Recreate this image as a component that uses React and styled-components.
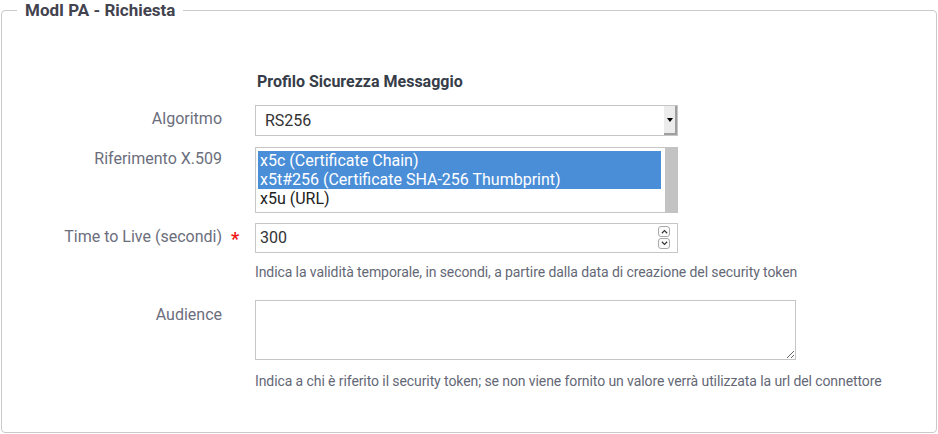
import styled, { createGlobalStyle } from "styled-components";

const GlobalStyle = createGlobalStyle`
  html, body {
    margin: 0;
    padding: 0;
    background: #ffffff;
    font-family: Roboto, "Liberation Sans", Arial, sans-serif;
  }
`;

const riferimenti = [
  { label: "x5c (Certificate Chain)", selected: true },
  { label: "x5t#256 (Certificate SHA-256 Thumbprint)", selected: true },
  { label: "x5u (URL)", selected: false },
];

export default function App() {
  return (
    <>
      <GlobalStyle />
      <Panel>
        <Legend>ModI PA - Richiesta</Legend>
        <Body>
          <Row>
            <span />
            <span />
            <SectionTitle>Profilo Sicurezza Messaggio</SectionTitle>
          </Row>

          <Row $gap={11}>
            <Label $top={4}>Algoritmo</Label>
            <span />
            <SelectBox>
              RS256
              <ArrowButton>
                <ArrowDown />
              </ArrowButton>
            </SelectBox>
          </Row>

          <Row $gap={10}>
            <Label $top={2}>Riferimento X.509</Label>
            <span />
            <ListBox>
              <OptionList>
                {riferimenti.map((opt) => (
                  <Option key={opt.label} $selected={opt.selected}>
                    {opt.label}
                  </Option>
                ))}
              </OptionList>
              <ScrollTrack />
            </ListBox>
          </Row>

          <Row $gap={0}>
            <Label $top={4}>Time to Live (secondi)</Label>
            <Required>*</Required>
            <Field>
              <NumberBox>
                300
                <Spinner>
                  <SpinButton>
                    <Chevron viewBox="0 0 8 5">
                      <path d="M1 4.5 L4 1.5 L7 4.5" />
                    </Chevron>
                  </SpinButton>
                  <SpinButton>
                    <Chevron viewBox="0 0 8 5">
                      <path d="M1 0.5 L4 3.5 L7 0.5" />
                    </Chevron>
                  </SpinButton>
                </Spinner>
              </NumberBox>
              <Hint $top={9}>
                Indica la validità temporale, in secondi, a partire dalla data
                di creazione del security token
              </Hint>
            </Field>
          </Row>

          <Row $gap={0} $top={18}>
            <Label $top={5}>Audience</Label>
            <span />
            <Field>
              <TextArea defaultValue="" />
              <Hint $top={11}>
                Indica a chi è riferito il security token; se non viene fornito
                un valore verrà utilizzata la url del connettore
              </Hint>
            </Field>
          </Row>
        </Body>
      </Panel>
    </>
  );
}

const Panel = styled.fieldset`
  margin: 0 1px;
  padding: 0;
  height: 433px;
  box-sizing: border-box;
  border: 1px solid #cacaca;
  border-radius: 4px;
`;

const Legend = styled.legend`
  margin-left: 15px;
  padding: 0 8px;
  font-size: 17px;
  line-height: 20px;
  font-weight: 700;
  color: #43434f;
`;

const Body = styled.div`
  padding-top: 52px;
  display: flex;
  flex-direction: column;
`;

const Row = styled.div`
  display: grid;
  grid-template-columns: 220px 33px 1fr;
  margin-top: ${({ $top }) => ($top ? `${$top}px` : "0")};
  margin-bottom: ${({ $gap }) => ($gap === undefined ? 13 : $gap)}px;
`;

const SectionTitle = styled.div`
  font-size: 16px;
  line-height: 20px;
  font-weight: 700;
  color: #363d48;
  padding-left: 2px;
`;

const Label = styled.div`
  text-align: right;
  font-size: 16px;
  line-height: 20px;
  color: #6b6e7c;
  padding-top: ${({ $top }) => $top}px;
`;

const Required = styled.span`
  color: #f01818;
  font-size: 18px;
  font-weight: 700;
  line-height: 20px;
  padding-top: 6px;
  padding-left: 9px;
`;

const Field = styled.div`
  display: flex;
  flex-direction: column;
`;

const SelectBox = styled.div`
  position: relative;
  box-sizing: border-box;
  width: 423px;
  height: 31px;
  border: 1px solid #c6c6c6;
  padding: 0 0 0 9px;
  font-size: 16px;
  line-height: 29px;
  color: #333333;
`;

const ArrowButton = styled.div`
  position: absolute;
  top: 0;
  right: 0;
  bottom: 0;
  width: 11px;
  background: #ececec;
  border-right: 2px solid #9f9f9f;
  border-bottom: 2px solid #9f9f9f;
  display: flex;
  align-items: center;
  justify-content: center;
`;

const ArrowDown = styled.span`
  width: 0;
  height: 0;
  border-left: 3px solid transparent;
  border-right: 3px solid transparent;
  border-top: 4px solid #000000;
`;

const ListBox = styled.div`
  position: relative;
  box-sizing: border-box;
  width: 423px;
  height: 66px;
  border: 1px solid #c6c6c6;
  display: flex;
`;

const OptionList = styled.div`
  flex: 1;
  padding: 3px 4px 0 2px;
`;

const Option = styled.div`
  font-size: 16px;
  line-height: 19px;
  padding-left: 2px;
  white-space: nowrap;
  color: ${({ $selected }) => ($selected ? "#ffffff" : "#222222")};
  background: ${({ $selected }) => ($selected ? "#4a8ed8" : "transparent")};
`;

const ScrollTrack = styled.div`
  width: 13px;
  margin: -1px -1px -1px 0;
  background: #c3c3c3;
`;

const NumberBox = styled.div`
  position: relative;
  box-sizing: border-box;
  width: 423px;
  height: 30px;
  border: 1px solid #c6c6c6;
  padding-left: 4px;
  font-size: 16px;
  line-height: 28px;
  color: #333333;
`;

const Spinner = styled.div`
  position: absolute;
  top: 2px;
  right: 7px;
  display: flex;
  flex-direction: column;
  gap: 1px;
`;

const SpinButton = styled.div`
  box-sizing: border-box;
  width: 12px;
  height: 11px;
  border: 1px solid #a8a8a8;
  border-radius: 3px;
  background: #fbfbfb;
  display: flex;
  align-items: center;
  justify-content: center;
`;

const Chevron = styled.svg`
  width: 7px;
  height: 5px;
  fill: none;
  stroke: #333333;
  stroke-width: 1.3;
`;

const Hint = styled.div`
  margin-top: ${({ $top }) => $top}px;
  font-size: 14px;
  line-height: 20px;
  letter-spacing: -0.09px;
  white-space: nowrap;
  color: #646876;
`;

const TextArea = styled.textarea`
  box-sizing: border-box;
  width: 541px;
  height: 60px;
  border: 1px solid #c6c6c6;
  border-radius: 0;
  padding: 4px;
  font-family: Roboto, "Liberation Sans", Arial, sans-serif;
  font-size: 14px;
  resize: both;
  outline: none;
`;
